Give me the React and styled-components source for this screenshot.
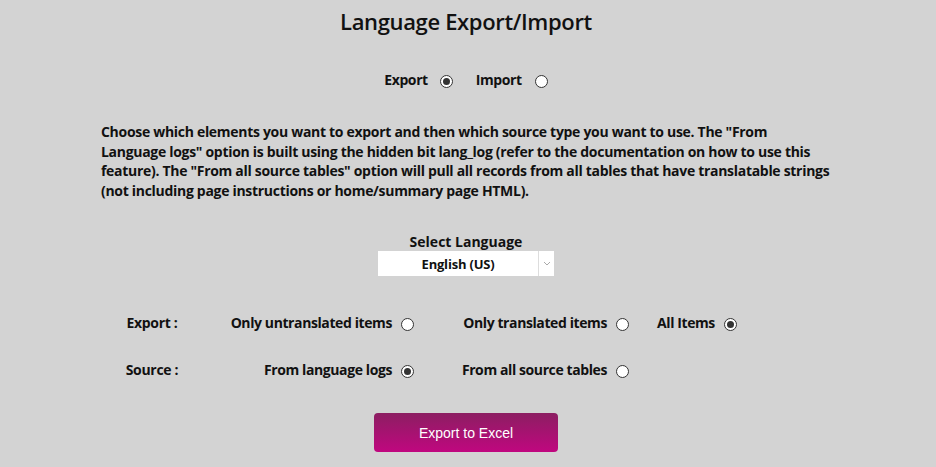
import React from "react";
import styled, { createGlobalStyle } from "styled-components";

const Global = createGlobalStyle`
  html, body { margin: 0; padding: 0; background: #d3d3d3; }
  body { font-family: "Open Sans", Lato, sans-serif; color: #111; }
`;

const Page = styled.div`
  width: 936px;
  height: 467px;
  background: #d3d3d3;
  display: flex;
  flex-direction: column;
  align-items: center;
  box-sizing: border-box;
  padding-top: 8px;
  padding-right: 4px;
`;

const Title = styled.h1`
  margin: 0;
  font-size: 22px;
  font-weight: 600;
  line-height: 26px;
  letter-spacing: -0.35px;
  color: #111;
`;

const ModeRow = styled.div`
  display: flex;
  align-items: center;
  margin-top: 37px;
  gap: 23px;
`;

const Option = styled.label`
  display: flex;
  align-items: center;
  gap: ${(p) => p.$gap || 9}px;
  font-size: 14px;
  font-weight: 700;
  line-height: 18px;
  letter-spacing: -0.4px;
  white-space: nowrap;
`;

const Radio = styled.span`
  display: inline-block;
  box-sizing: border-box;
  width: 13px;
  height: 13px;
  border-radius: 50%;
  border: 1px solid #333;
  background: #fff;
  position: relative;
  margin-top: 3px;
  &::after {
    content: "";
    display: ${(p) => (p.$checked ? "block" : "none")};
    position: absolute;
    left: 2px;
    top: 2px;
    width: 7px;
    height: 7px;
    border-radius: 50%;
    background: #333;
  }
`;

const Paragraph = styled.p`
  margin: 33px 0 0 101px;
  align-self: flex-start;
  font-size: 14px;
  font-weight: 700;
  line-height: 19.5px;
  letter-spacing: -0.3px;
  white-space: nowrap;
`;

const SelectBlock = styled.div`
  display: flex;
  flex-direction: column;
  align-items: center;
  margin-top: 33px;
`;

const SelectLabel = styled.div`
  font-size: 14px;
  font-weight: 700;
  line-height: 18px;
`;

const SelectBox = styled.div`
  display: flex;
  width: 176px;
  height: 25px;
  background: #fff;
`;

const SelectValue = styled.div`
  flex: 1;
  display: flex;
  align-items: center;
  justify-content: center;
  font-size: 13px;
  font-weight: 700;
  letter-spacing: -0.2px;
`;

const SelectArrow = styled.div`
  width: 15px;
  border-left: 1px solid #ddd;
  display: flex;
  align-items: center;
  justify-content: center;
`;

const Grid = styled.div`
  align-self: flex-start;
  margin-left: 100px;
  margin-top: 38px;
  display: grid;
  grid-template-columns: 104px 210px 215px auto;
  row-gap: 29px;
  align-items: center;
`;

const RowLabel = styled.div`
  text-align: center;
  font-size: 14px;
  font-weight: 700;
  line-height: 18px;
  letter-spacing: -0.3px;
`;

const Cell = styled.div`
  display: flex;
  justify-content: ${(p) => (p.$left ? "flex-start" : "flex-end")};
  padding-left: ${(p) => (p.$left ? 28 : 0)}px;
`;

const Button = styled.button`
  margin-top: 34px;
  width: 184px;
  height: 39px;
  border: none;
  border-radius: 4px;
  background: linear-gradient(to bottom, #8c1e62, #c0077f);
  color: #fff;
  font-family: "Liberation Sans", Arial, sans-serif;
  font-size: 14px;
  font-weight: 400;
  cursor: pointer;
`;

export default function App() {
  return (
    <>
      <Global />
      <Page>
        <Title>Language Export/Import</Title>
        <ModeRow>
          <Option $gap={12}>
            Export <Radio $checked />
          </Option>
          <Option $gap={13}>
            Import <Radio />
          </Option>
        </ModeRow>
        <Paragraph>
          Choose which elements you want to export and then which source type you want to use. The "From
          <br />
          Language logs" option is built using the hidden bit lang_log (refer to the documentation on how to use this
          <br />
          feature). The "From all source tables" option will pull all records from all tables that have translatable strings
          <br />
          (not including page instructions or home/summary page HTML).
        </Paragraph>
        <SelectBlock>
          <SelectLabel>Select Language</SelectLabel>
          <SelectBox>
            <SelectValue>English (US)</SelectValue>
            <SelectArrow>
              <svg width="8" height="5" viewBox="0 0 8 5">
                <path d="M1 1 L4 4 L7 1" fill="none" stroke="#aaa" strokeWidth="1" />
              </svg>
            </SelectArrow>
          </SelectBox>
        </SelectBlock>
        <Grid>
          <RowLabel>Export :</RowLabel>
          <Cell>
            <Option>
              Only untranslated items <Radio />
            </Option>
          </Cell>
          <Cell>
            <Option>
              Only translated items <Radio />
            </Option>
          </Cell>
          <Cell $left>
            <Option>
              All Items <Radio $checked />
            </Option>
          </Cell>
          <RowLabel>Source :</RowLabel>
          <Cell>
            <Option>
              From language logs <Radio $checked />
            </Option>
          </Cell>
          <Cell>
            <Option>
              From all source tables <Radio />
            </Option>
          </Cell>
          <div />
        </Grid>
        <Button>Export to Excel</Button>
      </Page>
    </>
  );
}
